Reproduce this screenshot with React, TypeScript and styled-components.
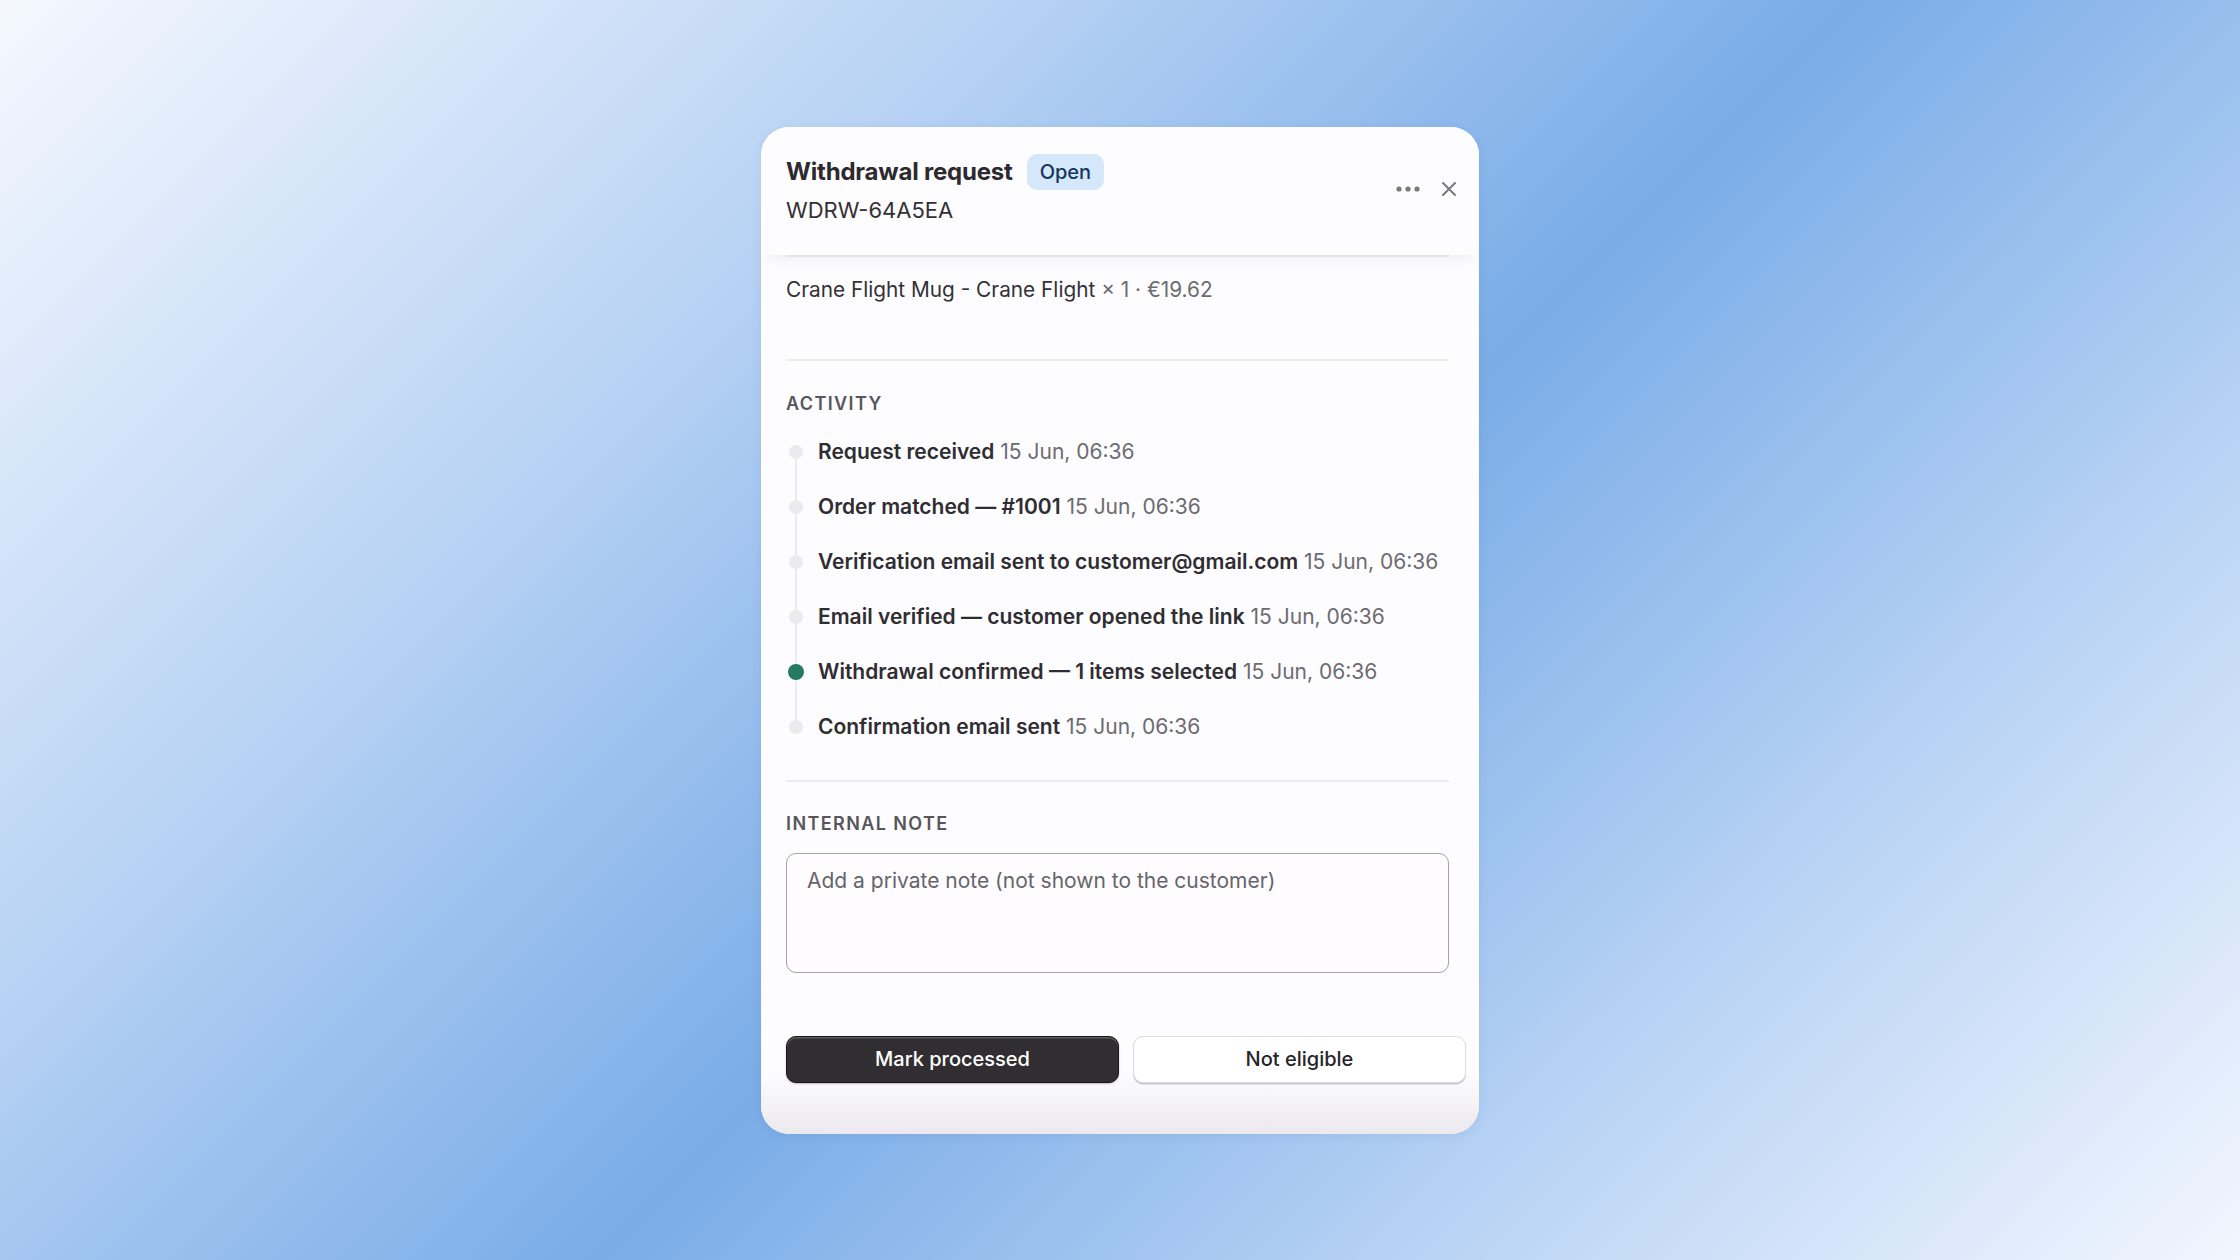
import { Component, ReactNode } from "react";
import styled, { createGlobalStyle } from "styled-components";

const GlobalStyle = createGlobalStyle`
  html, body {
    margin: 0;
    padding: 0;
  }
  body {
    font-family: Inter, "Noto Sans", "Liberation Sans", sans-serif;
    -webkit-font-smoothing: antialiased;
  }
  * {
    box-sizing: border-box;
  }
`;

const Backdrop = styled.div`
  width: 100vw;
  height: 100vh;
  display: flex;
  align-items: center;
  justify-content: center;
  background: linear-gradient(
    135deg,
    #f5f8fe 0%,
    #b9d3f4 28%,
    #7aace7 53%,
    #bcd5f5 78%,
    #f2f6fe 100%
  );
`;

const Panel = styled.div`
  width: 718px;
  background: #fdfcfe;
  border-radius: 28px;
  overflow: hidden;
  display: flex;
  flex-direction: column;
  box-shadow: 0 2px 10px rgba(40, 70, 120, 0.08);
`;

const Header = styled.header`
  position: relative;
  z-index: 1;
  display: flex;
  align-items: center;
  padding: 27px 21px 31px 25px;
  background: #fdfcfe;
  box-shadow: 0 8px 14px -6px rgba(0, 0, 0, 0.08);
`;

const HeaderText = styled.div`
  flex: 1;
  display: flex;
  flex-direction: column;
  gap: 6px;
`;

const TitleRow = styled.div`
  display: flex;
  align-items: center;
  gap: 14px;
`;

const Title = styled.h2`
  margin: 0;
  font-size: 24px;
  font-weight: 700;
  color: #2c2a2e;
  letter-spacing: -0.2px;
`;

const Badge = styled.span`
  height: 36px;
  padding: 0 13px;
  display: inline-flex;
  align-items: center;
  border-radius: 10px;
  background: #d4e7fb;
  color: #173659;
  font-size: 20px;
  font-weight: 500;
`;

const Reference = styled.div`
  font-size: 22px;
  line-height: 28px;
  color: #333135;
`;

const HeaderActions = styled.div`
  display: flex;
  align-items: center;
  gap: 19px;
`;

const IconButton = styled.button`
  border: 0;
  background: none;
  padding: 0;
  display: flex;
  align-items: center;
  justify-content: center;
  color: #7a797d;
  cursor: pointer;
`;

const Body = styled.div`
  margin: 0 30px 0 25px;
  border-top: 2px solid #efeef1;
`;

const Section = styled.section<{ $top: number; $bottom: number; $divided?: boolean }>`
  padding-top: ${(p) => p.$top}px;
  padding-bottom: ${(p) => p.$bottom}px;
  border-bottom: ${(p) => (p.$divided ? "2px solid #ececee" : "none")};
`;

const ItemLine = styled.div`
  font-size: 20.8px;
  line-height: 28px;
  color: #343236;
`;

const Muted = styled.span`
  color: #6c6b70;
`;

const SectionLabel = styled.h3<{ $gap: number }>`
  margin: 0 0 ${(p) => p.$gap}px;
  font-size: 18px;
  line-height: 24px;
  font-weight: 600;
  letter-spacing: 1.4px;
  color: #57565b;
`;

const Timeline = styled.ol`
  list-style: none;
  margin: 0;
  padding: 0;
  display: flex;
  flex-direction: column;
  gap: 27px;
`;

const Event = styled.li<{ $first?: boolean; $last?: boolean }>`
  position: relative;
  display: flex;
  align-items: center;
  gap: 14px;
  font-size: 21px;
  line-height: 28px;
  color: #6c6b70;

  /* connector between dots */
  &::before {
    content: "";
    position: absolute;
    left: 9px;
    width: 2px;
    top: ${(p) => (p.$first ? "14px" : "-14px")};
    bottom: ${(p) => (p.$last ? "14px" : "-14px")};
    background: #ececee;
  }
`;

const Dot = styled.span<{ $active?: boolean }>`
  position: relative;
  z-index: 1;
  flex: none;
  width: ${(p) => (p.$active ? 16 : 14)}px;
  height: ${(p) => (p.$active ? 16 : 14)}px;
  margin-left: ${(p) => (p.$active ? 2 : 3)}px;
  margin-right: ${(p) => (p.$active ? 0 : 1)}px;
  border-radius: 50%;
  background: ${(p) => (p.$active ? "#267a61" : "#ebeaed")};
`;

const EventTitle = styled.strong`
  font-weight: 600;
  color: #2f2d31;
`;

const NoteField = styled.textarea`
  display: block;
  width: 100%;
  height: 120px;
  resize: none;
  padding: 13px 20px;
  border: 1.5px solid #a2a1a6;
  border-radius: 10px;
  background: #fefcff;
  font-family: inherit;
  font-size: 21px;
  line-height: 28px;
  color: #2f2d31;
  outline: none;

  &::placeholder {
    color: #66656a;
  }
`;

const Footer = styled.footer`
  display: flex;
  gap: 14px;
  padding: 63px 13px 51px 25px;
  background: linear-gradient(180deg, #fdfcfe 0%, #fdfcfe 62%, #ebe9ed 100%);
`;

const ActionButton = styled.button<{ $primary?: boolean }>`
  flex: 1;
  height: 47px;
  border-radius: 10px;
  font-family: inherit;
  font-size: 20px;
  font-weight: 500;
  cursor: pointer;
  color: ${(p) => (p.$primary ? "#ffffff" : "#262428")};
  background: ${(p) => (p.$primary ? "#312e32" : "#ffffff")};
  border: 1.5px solid ${(p) => (p.$primary ? "#19171a" : "#dcdbe0")};
  box-shadow: ${(p) =>
    p.$primary
      ? "inset 0 1.5px 0 rgba(255,255,255,0.22), 0 1px 2px rgba(0,0,0,0.25)"
      : "0 1.5px 0 #c9c8cd"};
`;

const MoreIcon = () => (
  <svg width="26" height="8" viewBox="0 0 26 8" fill="currentColor">
    <circle cx="4" cy="4" r="2.6" />
    <circle cx="13" cy="4" r="2.6" />
    <circle cx="22" cy="4" r="2.6" />
  </svg>
);

const CloseIcon = () => (
  <svg width="18" height="18" viewBox="0 0 18 18" fill="none" stroke="currentColor" strokeWidth="2" strokeLinecap="round">
    <path d="M3 3l12 12M15 3L3 15" />
  </svg>
);

interface ActivityEntry {
  title: string;
  time: string;
  active?: boolean;
}

const activity: ActivityEntry[] = [
  { title: "Request received", time: "15 Jun, 06:36" },
  { title: "Order matched — #1001", time: "15 Jun, 06:36" },
  { title: "Verification email sent to customer@gmail.com", time: "15 Jun, 06:36" },
  { title: "Email verified — customer opened the link", time: "15 Jun, 06:36" },
  { title: "Withdrawal confirmed — 1 items selected", time: "15 Jun, 06:36", active: true },
  { title: "Confirmation email sent", time: "15 Jun, 06:36" },
];

export default class App extends Component {
  render(): ReactNode {
    return (
      <Backdrop>
        <GlobalStyle />
        <Panel>
          <Header>
            <HeaderText>
              <TitleRow>
                <Title>Withdrawal request</Title>
                <Badge>Open</Badge>
              </TitleRow>
              <Reference>WDRW-64A5EA</Reference>
            </HeaderText>
            <HeaderActions>
              <IconButton aria-label="More">
                <MoreIcon />
              </IconButton>
              <IconButton aria-label="Close">
                <CloseIcon />
              </IconButton>
            </HeaderActions>
          </Header>

          <Body>
            <Section $top={19} $bottom={55} $divided>
              <ItemLine>
                Crane Flight Mug - Crane Flight <Muted>× 1 · €19.62</Muted>
              </ItemLine>
            </Section>

            <Section $top={31} $bottom={39} $divided>
              <SectionLabel $gap={22}>ACTIVITY</SectionLabel>
              <Timeline>
                {activity.map((e, i) => (
                  <Event key={i} $first={i === 0} $last={i === activity.length - 1}>
                    <Dot $active={e.active} />
                    <span>
                      <EventTitle>{e.title}</EventTitle> {e.time}
                    </span>
                  </Event>
                ))}
              </Timeline>
            </Section>

            <Section $top={30} $bottom={0}>
              <SectionLabel $gap={17}>INTERNAL NOTE</SectionLabel>
              <NoteField placeholder="Add a private note (not shown to the customer)" />
            </Section>
          </Body>

          <Footer>
            <ActionButton $primary>Mark processed</ActionButton>
            <ActionButton>Not eligible</ActionButton>
          </Footer>
        </Panel>
      </Backdrop>
    );
  }
}
